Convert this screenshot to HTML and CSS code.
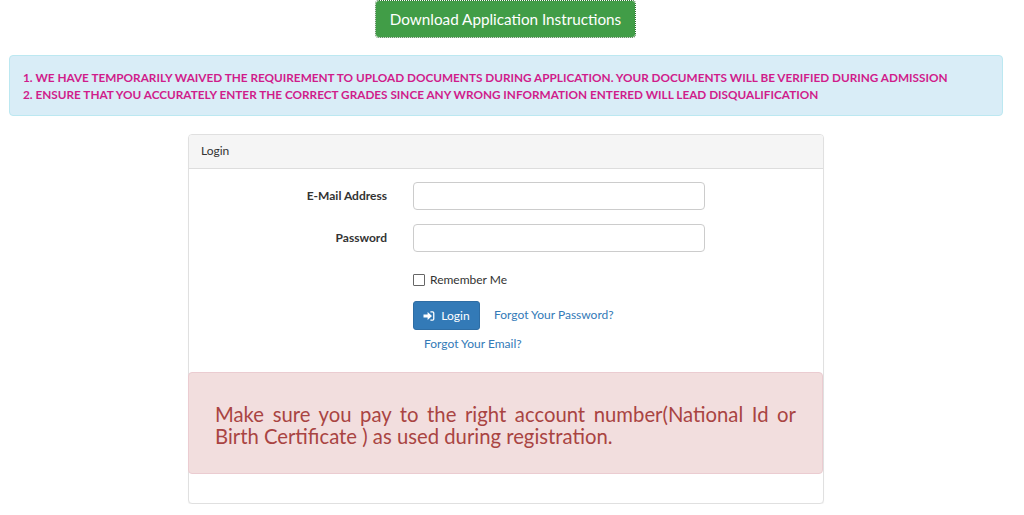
FILE: index.html
```html
<!DOCTYPE html>
<html lang="en">
<head>
  <meta charset="UTF-8">
  <title>Login</title>
  <link rel="stylesheet" href="styles.css">
</head>
<body>
  <div class="download-row">
    <a class="download" href="#">Download Application Instructions</a>
  </div>

  <div class="notice">
    1. WE HAVE TEMPORARILY WAIVED THE REQUIREMENT TO UPLOAD DOCUMENTS DURING APPLICATION. YOUR DOCUMENTS WILL BE VERIFIED DURING ADMISSION<br>
    2. ENSURE THAT YOU ACCURATELY ENTER THE CORRECT GRADES SINCE ANY WRONG INFORMATION ENTERED WILL LEAD DISQUALIFICATION
  </div>

  <div class="panel">
    <div class="panel-heading">Login</div>
    <div class="panel-body">
      <div class="form-row">
        <label class="label">E-Mail Address</label>
        <input class="input" type="email">
      </div>
      <div class="form-row">
        <label class="label">Password</label>
        <input class="input" type="password">
      </div>
      <div class="remember">
        <span class="checkbox"></span>
        <span>Remember Me</span>
      </div>
      <div class="actions">
        <a class="login" href="#">
          <svg class="login-icon" viewBox="0 0 12 12" width="12" height="12">
            <path d="M0.5 4.6H4.6V2L9 6L4.6 10V7.4H0.5Z" fill="#fff"/>
            <path d="M7.4 1.2H9.6Q11.4 1.2 11.4 3V9Q11.4 10.8 9.6 10.8H7.4V9.6H9.4Q10.1 9.6 10.1 8.9V3.1Q10.1 2.4 9.4 2.4H7.4Z" fill="#fff"/>
          </svg>
          Login
        </a>
        <a class="link forgot-password" href="#">Forgot Your Password?</a>
      </div>
      <div class="email-row">
        <a class="link" href="#">Forgot Your Email?</a>
      </div>
    </div>
    <div class="warning">
      Make sure you pay to the right account number(National Id or Birth Certificate ) as used during registration.
    </div>
  </div>
</body>
</html>
```

FILE: styles.css
```css
* {
  box-sizing: border-box;
}

body {
  margin: 0;
  padding: 0 21px 0 9px;
  background-color: #fff;
  font-family: Lato, "Liberation Sans", sans-serif;
  font-size: 12px;
  line-height: 17px;
  color: #333;
}

a {
  text-decoration: none;
}

/* download button */
.download-row {
  height: 55px;
  padding-left: 366px;
}
.download {
  display: block;
  width: 261px;
  height: 38px;
  background: #419d47;
  background-clip: padding-box;
  border: 1px dotted #2f6f33;
  border-radius: 4px;
  color: #fff;
  font-size: 15.25px;
  line-height: 36px;
  text-align: center;
}

/* top notice */
.notice {
  height: 61px;
  padding: 13px 13px;
  background: #d9edf7;
  border: 1px solid #bce8f1;
  border-radius: 4px;
  color: #d01c8b;
  font-size: 11.78px;
  font-weight: 700;
  line-height: 17px;
}

/* login panel */
.panel {
  width: 636px;
  height: 370px;
  margin: 18px 0 0 179px;
  background: #fff;
  border: 1px solid #e0e0e0;
  border-radius: 4px;
  box-shadow: 0 1px 1px rgba(0, 0, 0, 0.05);
}
.panel-heading {
  height: 34px;
  padding: 7px 12px;
  background: #f5f5f5;
  border-bottom: 1px solid #ddd;
  border-radius: 3px 3px 0 0;
}
.panel-body {
  height: 203px;
  padding-top: 13px;
}
.form-row {
  display: flex;
  align-items: center;
  height: 28px;
  margin-bottom: 14px;
}
.label {
  width: 198px;
  padding-bottom: 2px;
  font-weight: 700;
  text-align: right;
}
.input {
  width: 292px;
  height: 28px;
  margin-left: 26px;
  border: 1px solid #ccc;
  border-radius: 4px;
  background: #fff;
}
.remember {
  display: flex;
  align-items: center;
  gap: 5px;
  margin: 19px 0 0 224px;
}
.checkbox {
  width: 12px;
  height: 12px;
  border: 1px solid #666;
  border-radius: 1px;
}
.actions {
  display: flex;
  align-items: center;
  gap: 14px;
  margin: 13px 0 0 224px;
}
.login {
  display: flex;
  align-items: center;
  justify-content: center;
  gap: 6px;
  width: 67px;
  height: 29px;
  background: #337ab7;
  border: 1px solid #2e6da4;
  border-radius: 3px;
  color: #fff;
}
.login-icon {
  display: block;
}
.link {
  color: #337ab7;
}
.forgot-password {
  padding-bottom: 2px;
}
.email-row {
  margin: 5px 0 0 235px;
}

/* red box */
.warning {
  height: 102px;
  margin-left: -1px;
  padding: 30px 26px;
  background: #f2dede;
  border: 1px solid #ebccd1;
  border-radius: 4px;
  color: #a94442;
  font-size: 20.3px;
  line-height: 22px;
  text-align: justify;
}
```
